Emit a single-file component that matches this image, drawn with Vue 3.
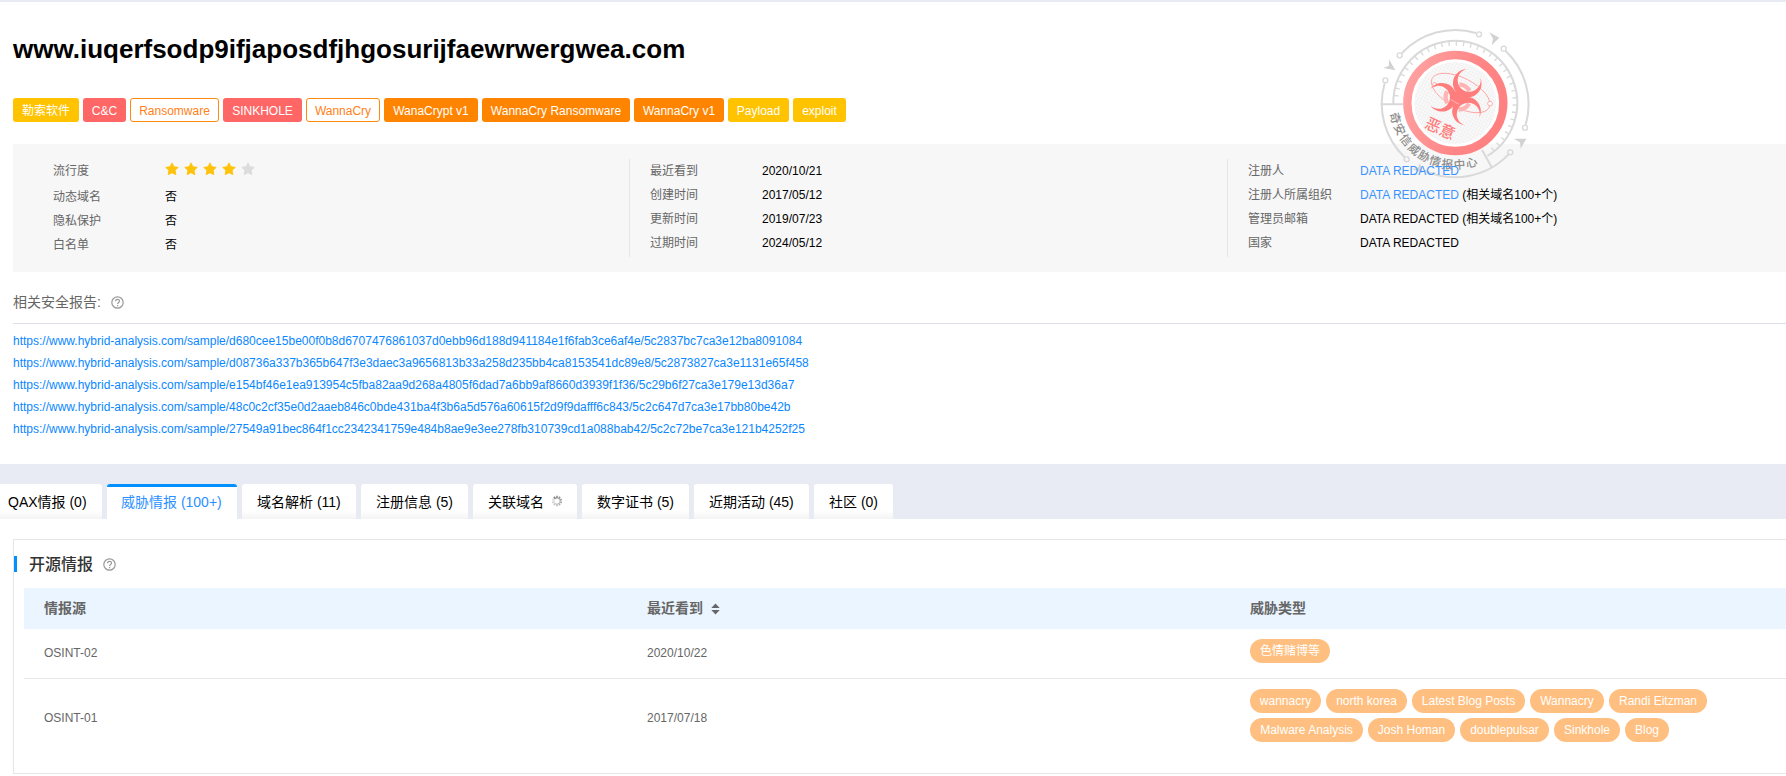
<script setup>
const tags = [
  { text: '勒索软件', kind: 'yellow', w: 66 },
  { text: 'C&C', kind: 'red', w: 43 },
  { text: 'Ransomware', kind: 'outline', w: 89 },
  { text: 'SINKHOLE', kind: 'red', w: 79 },
  { text: 'WannaCry', kind: 'outline', w: 74 },
  { text: 'WanaCrypt v1', kind: 'orange', w: 94 },
  { text: 'WannaCry Ransomware', kind: 'orange', w: 148 },
  { text: 'WannaCry v1', kind: 'orange', w: 90 },
  { text: 'Payload', kind: 'yellow', w: 61 },
  { text: 'exploit', kind: 'yellow', w: 53 },
]
const columns = [
  [
    { label: '流行度', stars: 4 },
    { label: '动态域名', value: '否' },
    { label: '隐私保护', value: '否' },
    { label: '白名单', value: '否' },
  ],
  [
    { label: '最近看到', value: '2020/10/21' },
    { label: '创建时间', value: '2017/05/12' },
    { label: '更新时间', value: '2019/07/23' },
    { label: '过期时间', value: '2024/05/12' },
  ],
  [
    { label: '注册人', link: 'DATA REDACTED' },
    { label: '注册人所属组织', link: 'DATA REDACTED', value: ' (相关域名100+个)' },
    { label: '管理员邮箱', value: 'DATA REDACTED (相关域名100+个)' },
    { label: '国家', value: 'DATA REDACTED' },
  ],
]
const base = 'https://www.hybrid-analysis.com/sample/'
const reports = [
  'd680cee15be00f0b8d6707476861037d0ebb96d188d941184e1f6fab3ce6af4e/5c2837bc7ca3e12ba8091084',
  'd08736a337b365b647f3e3daec3a9656813b33a258d235bb4ca8153541dc89e8/5c2873827ca3e1131e65f458',
  'e154bf46e1ea913954c5fba82aa9d268a4805f6dad7a6bb9af8660d3939f1f36/5c29b6f27ca3e179e13d36a7',
  '48c0c2cf35e0d2aaeb846c0bde431ba4f3b6a5d576a60615f2d9f9dafff6c843/5c2c647d7ca3e17bb80be42b',
  '27549a91bec864f1cc2342341759e484b8ae9e3ee278fb310739cd1a088bab42/5c2c72be7ca3e121b4252f25',
]
const tabs = [
  { text: 'QAX情报 (0)', w: 102 },
  { text: '威胁情报 (100+)', w: 130, active: true },
  { text: '域名解析 (11)', w: 114 },
  { text: '注册信息 (5)', w: 107 },
  { text: '关联域名', w: 104, loading: true },
  { text: '数字证书 (5)', w: 107 },
  { text: '近期活动 (45)', w: 115 },
  { text: '社区 (0)', w: 79 },
]
const rows = [
  { source: 'OSINT-02', date: '2020/10/22', lines: [[{ text: '色情赌博等', w: 80 }]] },
  {
    source: 'OSINT-01',
    date: '2017/07/18',
    lines: [
      [
        { text: 'wannacry', w: 71 },
        { text: 'north korea', w: 81 },
        { text: 'Latest Blog Posts', w: 113 },
        { text: 'Wannacry', w: 74 },
        { text: 'Randi Eitzman', w: 98 },
      ],
      [
        { text: 'Malware Analysis', w: 113 },
        { text: 'Josh Homan', w: 87 },
        { text: 'doublepulsar', w: 89 },
        { text: 'Sinkhole', w: 66 },
        { text: 'Blog', w: 44 },
      ],
    ],
  },
]
// Scale marks run clockwise from the left spoke to the lower-right spoke.
const ticks = Array.from({ length: 33 }, (_, i) => 187 + i * 7)
const width = (w) => ({ width: w + 'px' })
</script>

<template>
  <div class="page">
    <section class="summary">
      <h1>www.iuqerfsodp9ifjaposdfjhgosurijfaewrwergwea.com</h1>
      <div class="tags">
        <span v-for="t in tags" :key="t.text" class="tag" :class="t.kind" :style="width(t.w)">{{ t.text }}</span>
      </div>

      <div class="info">
        <div v-for="(col, c) in columns" :key="c" class="col">
          <div v-for="r in col" :key="r.label" class="item" :class="{ rating: r.stars }">
            <span class="label">{{ r.label }}</span>
            <span v-if="r.stars" class="stars">
              <svg v-for="n in 5" :key="n" viewBox="0 0 24 24" :class="{ off: n > r.stars }">
                <path d="M12 1.500L15.300 8.200L22.700 9.200L17.300 14.400L18.600 21.800L12 18.300L5.400 21.800L6.700 14.400L1.300 9.200L8.700 8.200Z" />
              </svg>
            </span>
            <span v-else class="value"><a v-if="r.link">{{ r.link }}</a>{{ r.value }}</span>
          </div>
        </div>
      </div>

      <svg class="seal" viewBox="0 0 600 540">
        <defs>
          <linearGradient id="ring" x1="0" y1="0.3" x2="1" y2="0.6">
            <stop offset="0" stop-color="#ffa0a0" />
            <stop offset="0.6" stop-color="#ff8787" />
            <stop offset="1" stop-color="#ff8080" />
          </linearGradient>
          <pattern id="weave" width="9" height="9" patternUnits="userSpaceOnUse" patternTransform="rotate(28)">
            <rect width="9" height="9" fill="#fafafa" />
            <path d="M0 0H9M0 0V9" stroke="#ececec" stroke-width="3" />
          </pattern>
          <path id="motto" d="M90.400 295A198 198 0 0 0 399.600 426.200" />
        </defs>
        <g fill="none" stroke="#d9d9d9" stroke-width="6">
          <path d="M348 54A220 220 0 0 0 126 114M437 108A220 220 0 0 1 497 329M74 205A222 222 0 0 0 134 427M192 466A222 222 0 0 0 445 419" />
          <path d="M62 268H130M366 405L396 458" />
          <path d="M100 268A186 186 0 1 1 382 423" />
          <g v-for="a in ticks" :key="a" :transform="`rotate(${a} 286 264)`">
            <path d="M458 264H473" stroke-width="4" />
          </g>
          <g stroke-width="4">
            <circle cx="357" cy="58" r="7.500" /><circle cx="119" cy="121" r="7.500" />
            <circle cx="431" cy="101" r="7.500" /><circle cx="495" cy="338" r="7.500" />
            <circle cx="76" cy="196" r="7.500" /><circle cx="140" cy="433" r="7.500" />
            <circle cx="451" cy="412" r="7.500" />
          </g>
        </g>
        <g fill="#d2d2d2">
          <path d="M388 52L418 68L395 91L399 71Z" />
          <path d="M87 133L106 166L70 159L87 152Z" />
          <path d="M461 371L499 371L482 401L480 382Z" />
          <path d="M180 444L188 474L156 462L174 458Z" />
        </g>
        <circle cx="286" cy="264" r="134" fill="#fff" />
        <circle cx="286" cy="264" r="123" fill="url(#weave)" />
        <circle cx="286" cy="264" r="144" fill="none" stroke="url(#ring)" stroke-width="25" />
        <g transform="translate(295 246)">
          <g fill="none" stroke="#ff9f9f" stroke-width="2.500">
            <ellipse cx="7" cy="-12" rx="96" ry="45" transform="rotate(27 7 -12)" />
            <circle cx="95" cy="20" r="7" fill="#fff" /><circle cx="-71" cy="-37" r="6" fill="#fff" />
          </g>
          <g v-for="a in [-57, 179, 60]" :key="a" :transform="`rotate(${a})`">
            <path d="M33.500 -18A38 38 0 0 1 33.500 18" fill="none" stroke="#ffb3b3" stroke-width="13" />
            <path d="M85 -23.500A43 43 0 1 0 85 23.500A34.500 34.500 0 1 1 85 -23.500Z" fill="#ff7d7d" />
          </g>
          <circle r="19" fill="#ff7d7d" />
          <path d="M-22 8L2 22" stroke="#ffd0d0" stroke-width="2" />
        </g>
        <text class="verdict" x="0" y="0" transform="translate(191 337) rotate(24)">恶意</text>
        <text class="motto"><textPath href="#motto">奇安信威胁情报中心</textPath></text>
      </svg>

      <div class="report-head">
        <span>相关安全报告:</span>
        <svg class="help" viewBox="0 0 13 13"><circle cx="6.500" cy="6.500" r="5.700" /><path d="M4.600 5.200C4.600 2.700 8.500 2.800 8.500 5.100C8.500 6.500 6.600 6.400 6.600 8M6.600 9V10.200" /></svg>
      </div>
      <div class="links">
        <a v-for="r in reports" :key="r">{{ base + r }}</a>
      </div>
    </section>

    <nav class="tabs">
      <div v-for="t in tabs" :key="t.text" class="tab" :class="{ active: t.active }" :style="width(t.w)">
        <span>{{ t.text }}</span>
        <svg v-if="t.loading" class="spin" viewBox="0 0 12 12">
          <path v-for="n in 10" :key="n" d="M6 .8V3.500" :transform="`rotate(${n * 36 + 180} 6 6)`" :opacity="0.15 + ((13 - n) % 10) * 0.045" />
        </svg>
      </div>
    </nav>

    <section class="panel">
      <div class="panel-title">
        <i class="mark"></i>
        <h2>开源情报</h2>
        <svg class="help" viewBox="0 0 13 13"><circle cx="6.500" cy="6.500" r="5.700" /><path d="M4.600 5.200C4.600 2.700 8.500 2.800 8.500 5.100C8.500 6.500 6.600 6.400 6.600 8M6.600 9V10.200" /></svg>
      </div>
      <div class="row head">
        <span>情报源</span>
        <span class="sort">最近看到
          <svg viewBox="0 0 9 12"><path d="M4.500 .5L8.700 5H.3ZM4.500 11.500L8.700 7H.3Z" /></svg>
        </span>
        <span>威胁类型</span>
      </div>
      <div v-for="r in rows" :key="r.source" class="row body">
        <span>{{ r.source }}</span>
        <span>{{ r.date }}</span>
        <div class="pills">
          <div v-for="(line, i) in r.lines" :key="i" class="pill-line">
            <span v-for="p in line" :key="p.text" class="pill" :style="width(p.w)">{{ p.text }}</span>
          </div>
        </div>
      </div>
    </section>
  </div>
</template>

<style>
html, body { overflow: hidden; background: #fff; }
</style>

<style scoped>
.page {
  width: 1786px;
  height: 776px;
  overflow: hidden;
  box-sizing: border-box;
  border-top: 2px solid #e8ebf3;
  background: #fff;
  font: 12px "Liberation Sans", "Noto Sans CJK SC", sans-serif;
  color: #000;
}
.summary { position: relative; height: 462px; padding-left: 13px; box-sizing: border-box; }
h1 { margin: 0; padding-top: 32px; font-size: 26px; line-height: 30px; font-weight: 700; }
.tags { display: flex; gap: 4px; margin-top: 34px; }
.tag {
  box-sizing: border-box;
  height: 24px;
  line-height: 24px;
  padding-top: 1px;
  border-radius: 3px;
  text-align: center;
  white-space: nowrap;
  color: #fff;
}
.yellow { background: #ffc300; }
.red { background: #ff6666; }
.orange { background: #ff8400; }
.outline { border: 1px solid #ff8a10; color: #ff7f1a; line-height: 22px; }
.info {
  display: grid;
  grid-template-columns: 616px 598px 559px;
  height: 128px;
  margin-top: 22px;
  padding: 15px 0;
  box-sizing: border-box;
  background: #f7f7f7;
}
.col { position: relative; z-index: 1; box-sizing: border-box; padding-left: 20px; border-left: 1px solid #e6e6e6; }
.col:first-child { padding-left: 40px; border-left: 0; }
.item { display: flex; height: 24px; line-height: 24px; }
.rating { height: 26px; }
.label { width: 112px; color: #666; }
.value { white-space: pre; }
.value a { color: #3a94ff; }
.stars { display: flex; gap: 5px; padding-top: 3px; }
.stars svg { width: 14px; height: 14px; fill: #ffc20a; stroke: #ffc20a; stroke-width: 1.5; stroke-linejoin: round; }
.stars svg.off { fill: #dcdcdc; stroke: #dcdcdc; }
.seal { position: absolute; left: 1360px; top: 13px; width: 200px; height: 180px; }
.verdict { font: 500 47px "Noto Sans CJK SC", sans-serif; fill: #ff7d7d; }
.motto { font: 500 35px "Noto Sans CJK SC", sans-serif; letter-spacing: 4.4px; fill: #8c8c8c; }
.report-head {
  display: flex;
  align-items: center;
  gap: 10px;
  height: 52px;
  padding-top: 7px;
  box-sizing: border-box;
  border-bottom: 1px solid #dcdfe9;
  font-size: 14px;
  color: #666;
}
.help { width: 13px; height: 13px; fill: none; stroke: #999; stroke-width: 1.2; }
.report-head .help { margin-top: 2px; }
.links { display: flex; flex-direction: column; padding-top: 6px; }
.links a { line-height: 22px; color: #0a87ff; }
.tabs { display: flex; gap: 5px; height: 55px; padding-top: 20px; box-sizing: border-box; background: #e8ebf3; }
.tab {
  display: flex;
  align-items: center;
  gap: 7px;
  box-sizing: border-box;
  height: 35px;
  padding: 0 0 1px 15px;
  border-radius: 3px 3px 0 0;
  background: linear-gradient(#fff 75%, #f4f4f4);
  font-size: 14px;
  white-space: nowrap;
}
.tab:first-child { padding-left: 8px; border-top-left-radius: 0; }
.tab.active { border-top: 3px solid #0090ff; padding: 0 0 4px 14px; background: #fff; color: #2b90ff; }
.spin { width: 12px; height: 12px; stroke: #222; stroke-width: 1.7; }
.panel { margin: 20px 0 0 13px; width: 1800px; height: 235px; box-sizing: border-box; border: 1px solid #e6e6e6; }
.panel-title { display: flex; align-items: center; height: 48px; box-sizing: border-box; }
.mark { width: 3px; height: 16px; background: #0090ff; }
h2 { margin: 0 10px 3px 12px; font-size: 16px; font-weight: 500; color: #333; }
.row { display: grid; grid-template-columns: 603px 603px 1fr; align-items: center; margin-left: 10px; padding-left: 20px; color: #666; }
.head { box-sizing: border-box; height: 41px; padding-bottom: 3px; background: #eaf5ff; font-size: 14px; font-weight: 700; }
.sort { display: flex; align-items: center; gap: 8px; }
.sort svg { width: 9px; height: 12px; fill: #666; margin-top: 3px; }
.body { box-sizing: border-box; height: 50px; border-bottom: 1px solid #e6e6e6; }
.body > span { margin-bottom: 2px; }
.body:last-child { height: 78px; border-bottom: 0; }
.body:last-child > span { margin-bottom: 0; }
.pills { align-self: start; padding-top: 10px; }
.body:last-child .pills { padding-top: 10px; }
.pill-line { display: flex; gap: 5px; margin-bottom: 5px; }
.pill { height: 24px; line-height: 24px; border-radius: 12px; background: #ffbf80; color: #fff; text-align: center; white-space: nowrap; }
</style>
